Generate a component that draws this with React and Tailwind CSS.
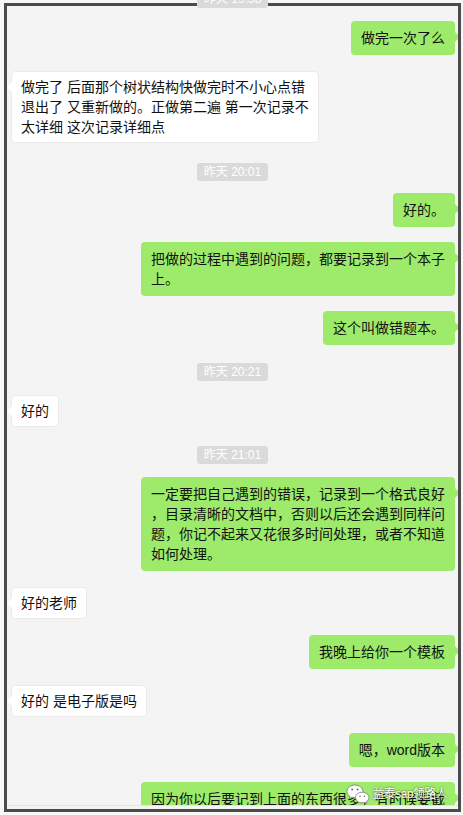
import React from 'react';

const font = "font-['Liberation_Sans','Noto_Sans_CJK_SC',sans-serif]";

function Mine({ lines, mt }) {
  return (
    <div className={`self-end mr-[3px] ${mt}`}>
      <div className="relative rounded-[4px] bg-[#9eea6a] px-[10px] py-[7px] text-[14px] leading-[20px] text-[#111] whitespace-nowrap">
        {lines.map((l, i) => (
          <div key={i}>{l}</div>
        ))}
        <span className="absolute left-full top-[11px] h-0 w-0 border-y-[5px] border-y-transparent border-l-[5px] border-l-[#9eea6a]" />
      </div>
    </div>
  );
}

function Theirs({ lines, mt }) {
  return (
    <div className={`self-start ml-[4px] ${mt}`}>
      <div className="relative rounded-[4px] border border-[#ebebeb] bg-white px-[9px] py-[5px] text-[14px] leading-[20px] text-[#111] whitespace-nowrap">
        {lines.map((l, i) => (
          <div key={i}>{l}</div>
        ))}
        <span className="absolute right-full top-[10px] h-0 w-0 border-y-[5px] border-y-transparent border-r-[5px] border-r-white" />
      </div>
    </div>
  );
}

function Stamp({ text, mt }) {
  return (
    <div className={`self-center ${mt}`}>
      <div className="rounded-[3px] bg-[#dadada] px-[7px] text-[12px] leading-[18px] text-white">{text}</div>
    </div>
  );
}

function WeChatMark() {
  return (
    <svg width="24" height="20" viewBox="0 0 24 20">
      <path d="M9 1C4.6 1 1 3.9 1 7.4c0 2 1.1 3.7 2.9 4.9L3.2 14.6l2.7-1.4c1 .3 2 .5 3.1.5 4.4 0 8-2.9 8-6.3S13.4 1 9 1z" fill="#fff" stroke="#8a8a8a" strokeWidth="1" />
      <path d="M16.2 8.2c-3.7 0-6.7 2.4-6.7 5.3s3 5.3 6.7 5.3c.8 0 1.6-.1 2.4-.4l2.3 1.2-.6-1.9c1.6-1 2.6-2.5 2.6-4.2 0-2.9-3-5.3-6.7-5.3z" fill="#fff" stroke="#8a8a8a" strokeWidth="1" />
      <circle cx="6.2" cy="5.6" r="1" fill="#6b6b6b" />
      <circle cx="11.6" cy="5.6" r="1" fill="#6b6b6b" />
      <circle cx="14" cy="12.3" r="0.8" fill="#6b6b6b" />
      <circle cx="18.4" cy="12.3" r="0.8" fill="#6b6b6b" />
    </svg>
  );
}

export default function App() {
  return (
    <div className={`min-h-screen bg-[#f8f8f8] pt-[3px] pl-[4px] ${font}`}>
      <div className="relative h-[809px] w-[457px] border-[3px] border-[#4b4b4b] bg-[#f4f4f4]">
        {/* timestamp cut off at the top */}
        <div className="absolute left-[190px] top-[-16px] rounded-[3px] bg-[#dadada] px-[7px] text-[12px] leading-[18px] text-white">
          昨天 19:58
        </div>

        <div className="flex h-[800px] flex-col overflow-hidden border-b border-[#e4e4e4]">
          <Mine mt="mt-[15px]" lines={['做完一次了么']} />
          <Theirs
            mt="mt-[16px]"
            lines={[
              '做完了 后面那个树状结构快做完时不小心点错',
              '退出了 又重新做的。正做第二遍 第一次记录不',
              '太详细 这次记录详细点',
            ]}
          />
          <Stamp mt="mt-[20px]" text="昨天 20:01" />
          <Mine mt="mt-[12px]" lines={['好的。']} />
          <Mine mt="mt-[15px]" lines={['把做的过程中遇到的问题，都要记录到一个本子', '上。']} />
          <Mine mt="mt-[15px]" lines={['这个叫做错题本。']} />
          <Stamp mt="mt-[18px]" text="昨天 20:21" />
          <Theirs mt="mt-[14px]" lines={['好的']} />
          <Stamp mt="mt-[19px]" text="昨天 21:01" />
          <Mine
            mt="mt-[13px]"
            lines={[
              '一定要把自己遇到的错误，记录到一个格式良好',
              '，目录清晰的文档中，否则以后还会遇到同样问',
              '题，你记不起来又花很多时间处理，或者不知道',
              '如何处理。',
            ]}
          />
          <Theirs mt="mt-[16px]" lines={['好的老师']} />
          <Mine mt="mt-[16px]" lines={['我晚上给你一个模板']} />
          <Theirs mt="mt-[16px]" lines={['好的 是电子版是吗']} />
          <Mine mt="mt-[16px]" lines={['嗯，word版本']} />
          <Mine mt="mt-[15px]" lines={['因为你以后要记到上面的东西很多，有时候要截']} />
        </div>

        {/* watermark */}
        <div className="absolute bottom-[5px] right-[11px] flex items-center gap-[2px]">
          <WeChatMark />
          <span className="text-[12px] leading-[14px] tracking-[-0.6px] text-white [text-shadow:0_0_2px_rgba(0,0,0,0.75)]">
            益泰sap领路人
          </span>
        </div>
      </div>
    </div>
  );
}
